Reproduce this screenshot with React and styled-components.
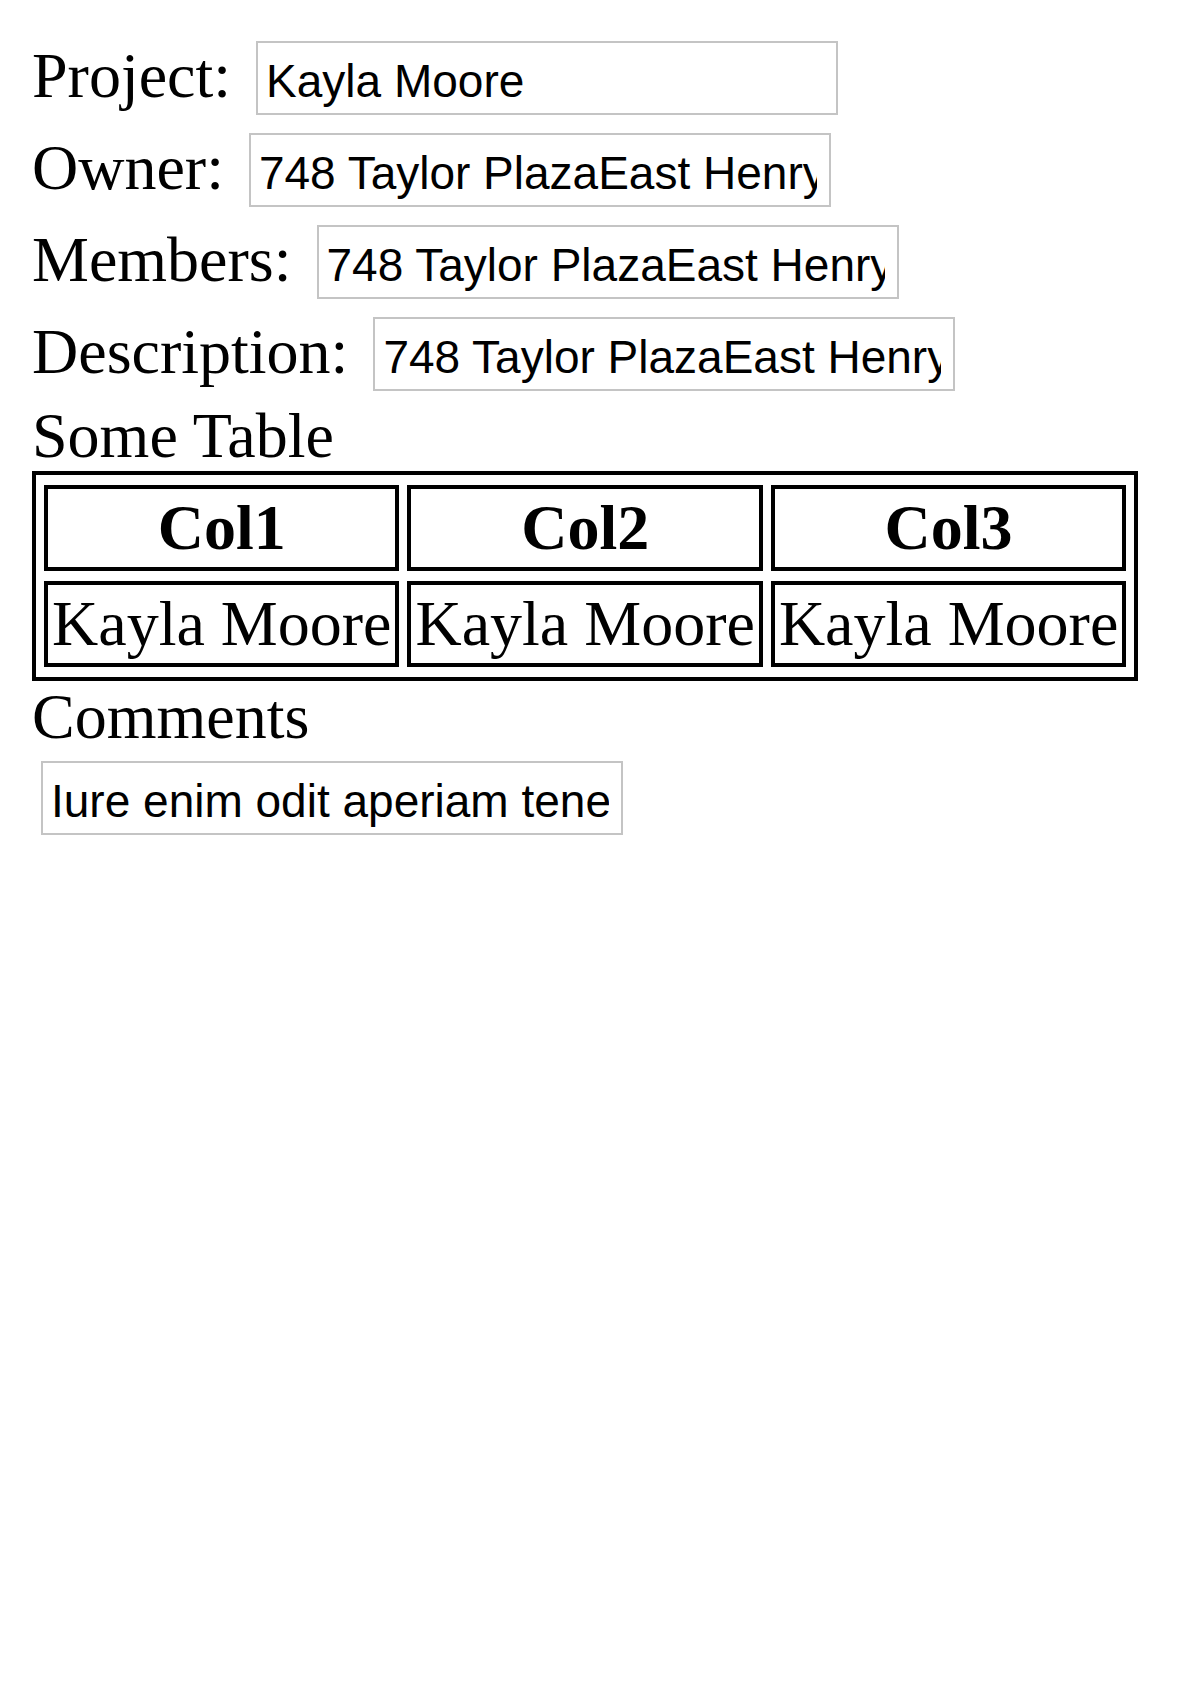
import React from "react";
import styled, { createGlobalStyle } from "styled-components";

const GlobalStyle = createGlobalStyle`
  body {
    margin: 0;
    background: #fff;
    color: #000;
    font-family: "Liberation Serif", "Times New Roman", serif;
  }
`;

const address = "748 Taylor PlazaEast Henrymouth, ND 30412";

const fields = [
  { label: "Project:", value: "Kayla Moore" },
  { label: "Owner:", value: address },
  { label: "Members:", value: address },
  { label: "Description:", value: address },
];

export default function App() {
  return (
    <>
      <GlobalStyle />
      <Page>
        {fields.map((f) => (
          <FieldRow key={f.label}>
            <Label>{f.label}</Label>
            <TextInput type="text" value={f.value} readOnly />
          </FieldRow>
        ))}
        <SectionTitle>Some Table</SectionTitle>
        <Table>
          <thead>
            <tr>
              <HeadCell>Col1</HeadCell>
              <HeadCell>Col2</HeadCell>
              <HeadCell>Col3</HeadCell>
            </tr>
          </thead>
          <tbody>
            <tr>
              <Cell>Kayla Moore</Cell>
              <Cell>Kayla Moore</Cell>
              <Cell>Kayla Moore</Cell>
            </tr>
          </tbody>
        </Table>
        <SectionTitle>Comments</SectionTitle>
        <TextInput
          type="text"
          value="Iure enim odit aperiam tenetur quia"
          readOnly
        />
      </Page>
    </>
  );
}

const Page = styled.div`
  padding: 32px;
  font-size: 64px;
`;

const FieldRow = styled.div`
  display: flex;
  align-items: baseline;
  gap: 16px;
`;

const Label = styled.span`
  white-space: nowrap;
`;

const TextInput = styled.input`
  box-sizing: border-box;
  width: 582px;
  height: 74px;
  margin: 9px;
  padding: 6px 12px 0 8px;
  border: 2px solid #c4c4c4;
  border-radius: 0;
  outline: none;
  background: #fff;
  color: #000;
  font-family: "Liberation Sans", Arial, sans-serif;
  font-size: 46px;
`;

const SectionTitle = styled.div`
  line-height: 71px;
`;

const Table = styled.table`
  border: 4px solid #000;
  border-spacing: 8px 10px;
  font-size: 64px;
`;

const HeadCell = styled.th`
  border: 4px solid #000;
  padding: 2px 4px;
  font-weight: bold;
  text-align: center;
`;

const Cell = styled.td`
  border: 4px solid #000;
  padding: 2px 4px;
`;
